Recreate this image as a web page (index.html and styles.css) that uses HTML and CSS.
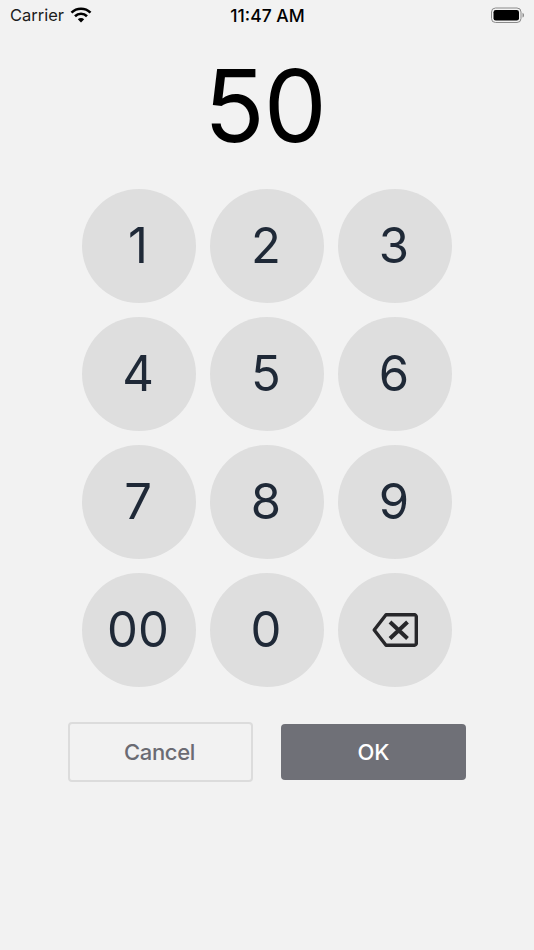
FILE: index.html
```html
<!DOCTYPE html>
<html lang="en">
<head>
<meta charset="utf-8">
<title>Keypad</title>
<link rel="stylesheet" href="styles.css">
</head>
<body>
<div class="screen">
  <header class="status">
    <div class="status-left">
      <span class="carrier">Carrier</span>
      <svg class="wifi" width="22" height="16" viewBox="0 0 22 16"><path d="M1.500 5.600A13.600 13.600 0 0 1 20.500 5.600" fill="none" stroke="#000" stroke-width="2.600"/><path d="M5 9.200A8.600 8.600 0 0 1 17 9.200" fill="none" stroke="#000" stroke-width="2.600"/><path d="M11 15.500 7.800 12.300A4.600 4.600 0 0 1 14.200 12.300Z" fill="#000"/></svg>
    </div>
    <span class="time">11:47 AM</span>
    <svg class="battery" width="34" height="16" viewBox="0 0 34 16"><rect x="0.500" y="1" width="29.500" height="14.500" rx="4" fill="none" stroke="#8a8a8a" stroke-width="1"/><rect x="2.500" y="3" width="25.500" height="10.500" rx="2.300" fill="#000"/><path d="M31.500 5.800C32.600 6.200 33 7 33 8.200S32.600 10.200 31.500 10.600Z" fill="#8a8a8a"/></svg>
  </header>
  <div class="display">50</div>
  <div class="keypad">
    <button class="key">1</button>
    <button class="key">2</button>
    <button class="key">3</button>
    <button class="key">4</button>
    <button class="key">5</button>
    <button class="key">6</button>
    <button class="key">7</button>
    <button class="key">8</button>
    <button class="key">9</button>
    <button class="key">00</button>
    <button class="key">0</button>
    <button class="key key-icon" aria-label="Delete">
      <svg width="46" height="34" viewBox="0 0 46 34"><path d="M14 1.800H42.500A1.800 1.800 0 0 1 44.300 3.600V30.400A1.800 1.800 0 0 1 42.500 32.200H14L2.200 17Z" fill="none" stroke="#27272a" stroke-width="3.400" stroke-linejoin="round"/><path d="M18 9 35.500 25.500M35.500 9 18 25.500" fill="none" stroke="#27272a" stroke-width="4"/></svg>
    </button>
  </div>
  <div class="actions">
    <button class="btn btn-cancel">Cancel</button>
    <button class="btn btn-ok">OK</button>
  </div>
</div>
</body>
</html>
```
FILE: styles.css
```css
* { box-sizing: border-box; }
html, body { margin: 0; padding: 0; }
body { width: 534px; height: 950px; background: #f2f2f2; font-family: Inter, "Liberation Sans", sans-serif; overflow: hidden; }
.screen { display: flex; flex-direction: column; align-items: center; height: 950px; }
.status { width: 100%; height: 30px; padding: 0 9px 0 10px; display: grid; grid-template-columns: 1fr auto 1fr; align-items: center; color: #000; }
.status-left { display: flex; align-items: center; gap: 6px; }
.carrier { font-size: 16.500px; color: #1c1c1c; }
.wifi { display: block; }
.time { font-size: 17.500px; font-weight: 500; }
.battery { justify-self: end; display: block; }
.display { margin-top: 16px; margin-right: 4px; height: 119px; line-height: 119px; font-size: 100px; font-family: Inter, sans-serif; color: #000; letter-spacing: -1px; }
.keypad { margin-top: 24px; display: grid; grid-template-columns: repeat(3, 114px); grid-auto-rows: 114px; gap: 14px; }
.key { width: 114px; height: 114px; border: 0; border-radius: 50%; background: #dedede; color: #1f2937; font-family: Inter, sans-serif; font-size: 49px; padding: 0 2px 2px 0; display: flex; align-items: center; justify-content: center; }
.key-icon { padding: 0; }
.actions { margin-top: 35px; display: flex; align-items: center; gap: 28px; }
.btn { width: 185px; font-family: Inter, sans-serif; font-size: 22px; font-weight: 500; border-radius: 4px; padding: 0; }
.btn-cancel { height: 60px; background: #f2f2f2; border: 2px solid #dcdcdc; color: #6b6b73; letter-spacing: -0.300px; padding-right: 2px; }
.btn-ok { height: 56px; background: #6f7077; border: 0; color: #fff; }
```
